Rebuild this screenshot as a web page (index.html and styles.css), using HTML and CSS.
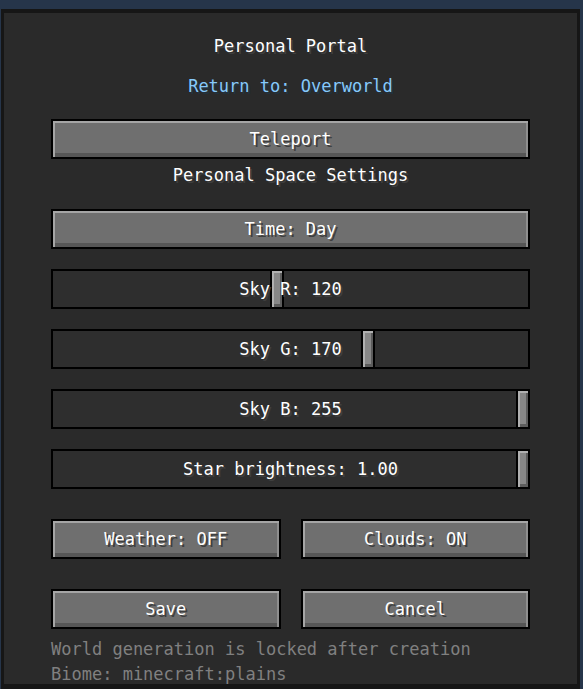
FILE: index.html
```html
<!DOCTYPE html>
<html lang="en">
<head>
  <meta charset="UTF-8" />
  <meta name="viewport" content="width=device-width, initial-scale=1.0"/>
  <title>Personal Portal</title>
  <link rel="stylesheet" href="styles.css">
</head>
<body>

  <div class="panel">
    <h1 class="heading">Personal Portal</h1>
    <p class="return-to">Return to: Overworld</p>

    <button class="mc-btn teleport">Teleport</button>

    <h2 class="heading section">Personal Space Settings</h2>

    <button class="mc-btn time">Time: Day</button>

    <!-- handle left = value / max * (479 - 14) - 2 -->
    <div class="slider">
      <span class="handle" style="left: 217px"></span>
      <span class="label">Sky R: 120</span>
    </div>
    <div class="slider">
      <span class="handle" style="left: 308px"></span>
      <span class="label">Sky G: 170</span>
    </div>
    <div class="slider">
      <span class="handle" style="left: 463px"></span>
      <span class="label">Sky B: 255</span>
    </div>
    <div class="slider">
      <span class="handle" style="left: 463px"></span>
      <span class="label">Star brightness: 1.00</span>
    </div>

    <div class="btn-row">
      <button class="mc-btn">Weather: OFF</button>
      <button class="mc-btn">Clouds: ON</button>
    </div>

    <div class="btn-row">
      <button class="mc-btn">Save</button>
      <button class="mc-btn">Cancel</button>
    </div>

    <p class="note">World generation is locked after creation</p>
    <p class="note second">Biome: minecraft:plains</p>
  </div>

</body>
</html>
```

FILE: styles.css
```css
* {
  box-sizing: border-box;
  margin: 0;
  padding: 0;
}

html, body {
  height: 100%;
}

body {
  background: #26354a;
  font-family: 'DejaVu Sans Mono', 'Liberation Mono', monospace;
  font-size: 17px;
  line-height: 20px;
  color: #fff;
  overflow: hidden;
}

.panel {
  margin: 9px 3px 0 1px;
  height: 680px;
  background: #2a2a2a;
  border: 3px solid #161616;
  border-top-width: 4px;
  border-bottom-width: 5px;
  padding: 23px 47px 0;
}

.heading {
  font-size: 17px;
  font-weight: normal;
  text-align: center;
  text-shadow: 2px 2px 0 #3f3f3f;
}

.return-to {
  margin-top: 20px;
  text-align: center;
  color: #86c9fb;
  text-shadow: 2px 2px 0 #21323f;
}

.section {
  margin-top: 6px;
}

/* stone buttons */
.mc-btn {
  display: flex;
  align-items: center;
  justify-content: center;
  width: 100%;
  height: 40px;
  padding-bottom: 1px;
  border: 2px solid #000;
  background: #6f6f6f;
  box-shadow:
    inset 2px 2px 0 #a5a5a5,
    inset -2px 0 0 #8e8e8e,
    inset 0 -4px 0 #565656;
  font-family: inherit;
  font-size: 17px;
  color: #fff;
  text-shadow: 2px 2px 0 #3f3f3f;
  cursor: pointer;
}

.teleport {
  margin-top: 23px;
}

.time {
  margin-top: 24px;
}

/* value sliders */
.slider {
  position: relative;
  height: 40px;
  margin-top: 20px;
  border: 2px solid #000;
  background: #2e2e2e;
  display: flex;
  align-items: center;
  justify-content: center;
  padding-bottom: 1px;
}

.handle {
  position: absolute;
  top: -2px;
  bottom: -2px;
  width: 14px;
  border: 2px solid #000;
  background: #878787;
  box-shadow:
    inset 2px 2px 0 #b0b0b0,
    inset -2px -3px 0 #5c5c5c;
}

.slider .label {
  position: relative;
  text-shadow: 2px 2px 0 #3f3f3f;
}

.btn-row {
  display: grid;
  grid-template-columns: 1fr 1fr;
  gap: 20px;
  margin-top: 30px;
}

.note {
  margin-top: 10px;
  color: #808080;
}

.note.second {
  margin-top: 5px;
}
```
